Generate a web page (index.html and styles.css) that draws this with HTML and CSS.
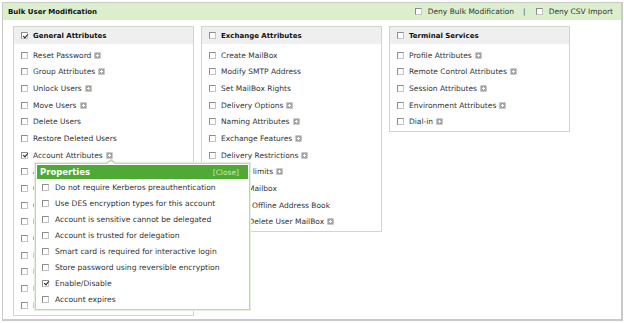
FILE: index.html
```html
<!DOCTYPE html>
<html lang="en">
<head>
  <meta charset="UTF-8" />
  <title>Bulk User Modification</title>
  <link rel="stylesheet" href="styles.css">
</head>
<body>
  <div class="panel">
    <div class="panel-head">
      <span class="title">Bulk User Modification</span>
      <div class="deny">
        <label class="opt"><span class="cb"></span>Deny Bulk Modification</label>
        <span class="sep">|</span>
        <label class="opt"><span class="cb"></span>Deny CSV Import</label>
      </div>
    </div>

    <div class="cols">
      <div class="col">
        <div class="col-head"><span class="cb on"></span>General Attributes</div>
        <ul class="items">
          <li><span class="cb"></span>Reset Password <span class="plus"></span></li>
          <li><span class="cb"></span>Group Attributes <span class="plus"></span></li>
          <li><span class="cb"></span>Unlock Users <span class="plus"></span></li>
          <li><span class="cb"></span>Move Users <span class="plus"></span></li>
          <li><span class="cb"></span>Delete Users</li>
          <li><span class="cb"></span>Restore Deleted Users</li>
          <li><span class="cb on"></span>Account Attributes <span class="plus"></span></li>
          <li><span class="cb"></span>Address Attributes <span class="plus"></span></li>
          <li><span class="cb"></span>Contact Attributes <span class="plus"></span></li>
          <li><span class="cb"></span>Organization Attributes <span class="plus"></span></li>
          <li><span class="cb"></span>Profile Attributes <span class="plus"></span></li>
          <li><span class="cb"></span>Custom Attributes <span class="plus"></span></li>
          <li><span class="cb"></span>Logon Hours</li>
          <li><span class="cb"></span>Password Settings <span class="plus"></span></li>
          <li><span class="cb"></span>Home Folder <span class="plus"></span></li>
          <li><span class="cb"></span>Manager Attributes <span class="plus"></span></li>
        </ul>
      </div>

      <div class="col">
        <div class="col-head"><span class="cb"></span>Exchange Attributes</div>
        <ul class="items">
          <li><span class="cb"></span>Create MailBox</li>
          <li><span class="cb"></span>Modify SMTP Address</li>
          <li><span class="cb"></span>Set MailBox Rights</li>
          <li><span class="cb"></span>Delivery Options <span class="plus"></span></li>
          <li><span class="cb"></span>Naming Attributes <span class="plus"></span></li>
          <li><span class="cb"></span>Exchange Features <span class="plus"></span></li>
          <li><span class="cb"></span>Delivery Restrictions <span class="plus"></span></li>
          <li><span class="cb"></span>Storage limits <span class="plus"></span></li>
          <li><span class="cb"></span>Delete Mailbox</li>
          <li><span class="cb"></span>Change Offline Address Book</li>
          <li><span class="cb"></span>Create/Delete User MailBox <span class="plus"></span></li>
        </ul>
      </div>

      <div class="col">
        <div class="col-head"><span class="cb"></span>Terminal Services</div>
        <ul class="items">
          <li><span class="cb"></span>Profile Attributes <span class="plus"></span></li>
          <li><span class="cb"></span>Remote Control Attributes <span class="plus"></span></li>
          <li><span class="cb"></span>Session Attributes <span class="plus"></span></li>
          <li><span class="cb"></span>Environment Attributes <span class="plus"></span></li>
          <li><span class="cb"></span>Dial-in <span class="plus"></span></li>
        </ul>
      </div>
    </div>

    <!-- properties popup for Account Attributes -->
    <div class="popup">
      <div class="popup-head">
        <span class="popup-title">Properties</span>
        <span class="close">[Close]</span>
      </div>
      <ul class="popup-items">
        <li><span class="cb"></span>Do not require Kerberos preauthentication</li>
        <li><span class="cb"></span>Use DES encryption types for this account</li>
        <li><span class="cb"></span>Account is sensitive cannot be delegated</li>
        <li><span class="cb"></span>Account is trusted for delegation</li>
        <li><span class="cb"></span>Smart card is required for interactive login</li>
        <li><span class="cb"></span>Store password using reversible encryption</li>
        <li><span class="cb on"></span>Enable/Disable</li>
        <li><span class="cb"></span>Account expires</li>
      </ul>
    </div>
  </div>
</body>
</html>
```

FILE: styles.css
```css
* { box-sizing: border-box; }
body {
  margin: 0;
  background: #fff;
  font-family: "DejaVu Sans", Verdana, sans-serif;
  font-size: 7.5px;
  color: #333;
}
ul { list-style: none; margin: 0; padding: 0; }

.panel {
  position: relative;
  width: 621px;
  height: 319px;
  margin: 2px 0 0 2px;
  border: 1px solid #c9c9c9;
  border-right-width: 2px;
  border-bottom-width: 2px;
}
.panel-head {
  display: flex;
  align-items: center;
  justify-content: space-between;
  height: 17px;
  padding: 0 8px 0 5px;
  background: #dcefcd;
}
.title { font-weight: bold; font-size: 7px; color: #111; }
.deny { display: flex; align-items: center; }
.opt { display: flex; align-items: center; }
.opt .cb { margin-right: 6px; }
.sep { margin: 0 10px 0 9px; color: #555; }

.cols {
  display: flex;
  align-items: flex-start;
  gap: 7px;
  padding: 6px 0 0 10px;
}
.col {
  width: 181px;
  border: 1px solid #d3d3d3;
  padding-bottom: 1px;
}
.col-head {
  display: flex;
  align-items: center;
  height: 17px;
  padding-left: 7px;
  background: #efefef;
  font-weight: bold;
  font-size: 7px;
  color: #111;
}
.col-head .cb { margin-right: 5px; }
.items { padding-top: 3px; }
.items li {
  display: flex;
  align-items: center;
  height: 16.67px;
  padding-left: 7px;
  white-space: nowrap;
}
.items .cb { margin-right: 5px; }

.cb {
  position: relative;
  display: inline-block;
  flex: none;
  width: 7px;
  height: 7px;
  border: 1px solid #8c8c8c;
  border-right-color: #c4c4c4;
  border-bottom-color: #c4c4c4;
  background: #fff;
}
.cb.on::after {
  content: "";
  position: absolute;
  left: 1.5px;
  top: -0.5px;
  width: 2px;
  height: 4px;
  border: solid #222;
  border-width: 0 1.5px 1.5px 0;
  transform: rotate(40deg);
}

.plus {
  position: relative;
  display: inline-block;
  width: 7px;
  height: 7px;
  margin-left: 3px;
  background: #a3a3a3;
  border: 1px solid #c8c8c8;
  border-radius: 1px;
}
.plus::before, .plus::after {
  content: "";
  position: absolute;
  background: #fff;
}
.plus::before { left: 1px; top: 2px; width: 3px; height: 1px; }
.plus::after { left: 2px; top: 1px; width: 1px; height: 3px; }

.popup {
  position: absolute;
  left: 32px;
  top: 160px;
  width: 215px;
  padding: 1px 1px 2px;
  background: #fff;
  border: 1px solid #b7dba5;
  box-shadow: 0 0 0 1px #e2f1da;
}
.popup::before, .popup::after {
  content: "";
  position: absolute;
  left: 70px;
  border: solid transparent;
  border-width: 0 5px 4px;
}
.popup::before { top: -5px; border-bottom-color: #b7dba5; }
.popup::after { top: -3px; left: 71px; border-width: 0 4px 3px; border-bottom-color: #fff; }
.popup-head {
  display: flex;
  align-items: center;
  justify-content: space-between;
  height: 14px;
  padding: 0 9px 0 3px;
  background: #4eaa34;
}
.popup-title { font-weight: bold; font-size: 8.5px; color: #fff; }
.close { color: #cfe9bf; font-size: 7.5px; }
.popup-items li {
  display: flex;
  align-items: center;
  height: 16px;
  padding-left: 5px;
  font-size: 7.6px;
  white-space: nowrap;
}
.popup-items .cb { margin-right: 6px; }
```
